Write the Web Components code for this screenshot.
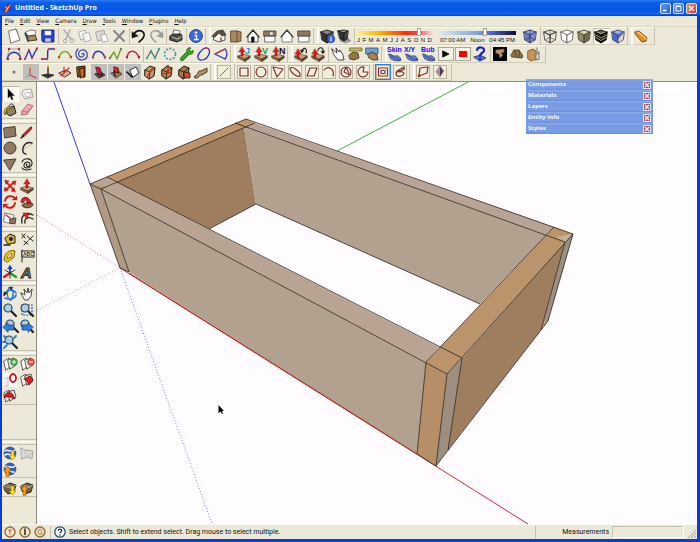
<!DOCTYPE html>
<html lang="en">
<head>
<meta charset="utf-8">
<title>Untitled - SketchUp Pro</title>
<style>
  :root {
    --face: #ece9d8;
    --edge: #c5c1ae;
    --frame: #0a3ecf;
    --menu-font: 'DejaVu Sans Condensed', 'DejaVu Sans', sans-serif;
    --ui-font: Roboto, 'Open Sans', sans-serif;
    --bold-font: 'Open Sans', 'Noto Sans', sans-serif;
  }
  html, body { height: 100%; margin: 0; }
  body { background: var(--face); font-family: var(--ui-font); color: #111; }
</style>
</head>
<body>

<sk-window caption="Untitled - SketchUp Pro">
  <sk-menubar slot="menu" items="File,Edit,View,Camera,Draw,Tools,Window,Plugins,Help"></sk-menubar>

  <sk-toolbar slot="bars" label="Standard" tools="new open save | cut copy paste delete | undo redo | print | info || iso top front right back left || shadowInfo shadow |">
    <sk-slider label="Month" kind="month" value="83" ticks="J,F,M,A,M,J,J,A,S,O,N,D"></sk-slider>
    <sk-slider label="Time of day" kind="time" value="60" ticks="07:00 AM,Noon,04:45 PM"></sk-slider>
    <sk-toolbar slot="more" label="Face style" tools="xray | wire hidden shaded textured:on mono || section"></sk-toolbar>
  </sk-toolbar>
  <sk-toolbar slot="bars" label="Curves" tools="bez1 bez2 bez3 bez4 spiral bez5 bez6 bez7 | poly1 polygonPts wrench blob sector || pushJ pushV pushN || undoPush redoPush | grab tape2 project || skin xy bub play stop help3d | scene fan slicer"></sk-toolbar>
  <sk-toolbar slot="bars" label="Construction" tools="dot axisRed:dim axisBlack plane door boxRed:dim boxRed2:dim layer:dim solid1 solid2 solid3 path || line | f-rect f-circle f-tri f-ellipse f-para f-arc f-polar f-pie | f-select:sel f-free || f-poly f-gem"></sk-toolbar>

  <sk-palette slot="side"></sk-palette>
  <sk-viewport></sk-viewport>
  <sk-tray slot="tray">
    <sk-panel>Components</sk-panel>
    <sk-panel>Materials</sk-panel>
    <sk-panel>Layers</sk-panel>
    <sk-panel>Entity Info</sk-panel>
    <sk-panel>Styles</sk-panel>
  </sk-tray>
  <sk-statusbar slot="status" label="Measurements">Select objects. Shift to extend select. Drag mouse to select multiple.</sk-statusbar>
</sk-window>

<script>
/* ── Icon helpers ─────────────────────────────────────────────────────────── */

const shape = (d, fill = 'none', stroke = '#222', w = 1) =>
  `<path d="${d}" fill="${fill}" stroke="${stroke}" stroke-width="${w}" stroke-linejoin="round" stroke-linecap="round"/>`;
const disc = (x, y, r, fill, stroke = 'none', w = 1) =>
  `<circle cx="${x}" cy="${y}" r="${r}" fill="${fill}" stroke="${stroke}" stroke-width="${w}"/>`;
const dots = (list, color) => list.map(([x, y]) => disc(x, y, 1.2, color)).join('');

const cube = (top, left, right, line) =>
  shape('M2 4L8 2L14 4L8 7Z', top, line, 0.8) +
  shape('M2 4L8 7V15L3 12Z', left, line, 0.8) +
  shape('M14 4L8 7V15L13 12Z', right, line, 0.8);

const redArrow = (x = 0, y = 0) =>
  `<g transform="translate(${x} ${y})">` + shape('M8 1L11 6H9V10H7V6H5Z', '#e51c1c', '#7a0000', 0.4) + '</g>';
const slab = shape('M2 10L7 8L14 10L9 13Z', '#c8a57c', '#4a3524', 0.6) +
  shape('M2 10L9 13V15.5L2 12Z', '#8c6a45', '#4a3524', 0.6) +
  shape('M14 10L9 13V15.5L14 12Z', '#5d452c', '#4a3524', 0.6);
const letter = (t, color) => `<text x="9" y="8" font-size="9" font-weight="700" fill="${color}">${t}</text>`;
const wideLetter = t => `<text x="0" y="6" font-size="7" font-weight="700" fill="#1414ff">${t}</text>`;
const cloth = shape('M2 8C5 8 6 11 9 10C11 9 13 11 14 14C10 16 6 14 4 13Z', '#6d83cf', '#1f2d66', 0.8) +
  shape('M4 10C7 13 10 12 13 14', 'none', '#26388a', 0.8);

const maroon = '#7b3036';
const framed = inner => `<rect x="1.5" y="1.5" width="13" height="13" fill="#f1efd9" stroke="#b9b59d"/>` + inner;
const maroonLine = d => framed(shape(d, 'none', maroon, 1.2));
const lens = (x = 0) => `<g transform="translate(${x} 0)">` + shape('M9 9L14 14', 'none', '#222', 2.2) +
  disc(6, 6, 4, '#a9cdea', '#26485f', 1.2) + '</g>';
const box3 = body => shape('M3 6L8 2L13 4L12 12L7 15L3 12Z', body, '#201812', 1) +
  shape('M3 6L8 8L13 4M8 8L7 15', 'none', '#201812', 0.8);
const globe = disc(8, 8, 6, '#2f5fc0', '#1a2f70', 0.6) +
  shape('M3 6C6 3 9 9 13 5M3 10C7 7 9 12 12 11', 'none', '#e8f0ff', 1.6);
const pages = shape('M2 5L7 2L9 10L4 14Z', '#fff', '#333', 0.8) + shape('M6 4L12 2L14 9L8 13Z', '#e5e5e5', '#333', 0.8);
const crate = shape('M2 6L8 3L14 5L12 12L6 14L3 11Z', '#6e5c46', '#2a2219', 0.9) +
  shape('M2 6L8 8L14 5M5 5L11 7', 'none', '#cabfa8', 0.8);
const yellowDown = shape('M9 6H12V11H14L10.500 15L7 11H9Z', '#ffe21a', '#9c7a00', 0.6);
const orangeUp = shape('M4 15V10H2L5.500 5L9 10H7V15Z', '#ff9d14', '#8c4a00', 0.6);

const ICONS = {
  /* standard */
  new: shape('M3 3L10 1L14 12L5 15Z', '#fff', '#555', 0.8) + shape('M10 1L12 5', 'none', '#777', 0.8),
  open: shape('M3 4L8 2L13 3L12 8H4Z', '#fff', '#555', 0.7) + shape('M2 5L5 13L14 12L12 7L6 8Z', '#a98c5f', '#38301d', 0.9) + shape('M2 6L5 14V9Z', '#2a7b9a', '#123', 0.6),
  save: shape('M2 2H14V14H3L2 13Z', '#2743cf', '#101d70', 0.8) + shape('M5 3H11V7H5Z', '#fff', '#cdd6ff', 0.4) + shape('M5 10H11V14H5Z', '#b9c4ee', '#101d70', 0.4),
  cut: shape('M4 2L11 11M10 2L6 11', 'none', '#aaa', 1.4) + disc(5, 13, 1.8, 'none', '#a5a5a5') + disc(12, 12.5, 1.8, 'none', '#a5a5a5'),
  copy: shape('M2 4L8 2L10 10L4 12Z', '#f4f4f0', '#aaa', 0.9) + shape('M6 6L12 4L14 12L8 14Z', '#f4f4f0', '#aaa', 0.9),
  paste: shape('M2 4L10 2L12 11L4 13Z', '#dcdad0', '#a4a4a0', 0.9) + shape('M7 7L12 6L14 13L9 14Z', '#fff', '#aaa', 0.9),
  delete: shape('M3 3L13 13M13 3L4 13', 'none', '#85858a', 2),
  undo: shape('M3 6C7 0 14 3 13 8C12 12 9 13 8 14', 'none', '#111', 1.6) + shape('M1 4V10L7 8Z', '#111', '#111', 0.5),
  redo: shape('M13 6C9 0 2 3 3 8C4 12 7 13 8 14', 'none', '#9b9b9b', 1.5) + shape('M15 4V10L9 8Z', '#9b9b9b', '#9b9b9b', 0.5),
  print: shape('M6 2L12 3L11 7H5Z', '#fff', '#444', 0.7) + shape('M2 8L5 6H13L14 8V12L9 14L2 12Z', '#4a4a48', '#111', 0.8) + shape('M4 9L9 11L13 9', 'none', '#c9c9c0', 1) + disc(10, 12, 0.8, '#66c060'),
  info: disc(8, 8, 6.4, '#3c6be0', '#172f83', 0.9) + disc(8, 4.6, 1.2, '#fff') + shape('M7 7.500H8.500V11.500M6.500 11.500H10', 'none', '#fff', 1.3),
  /* views */
  iso: shape('M3 8L8 4L14 7V12L8 14L3 12Z', '#f4f4f4', '#333', 0.8) + shape('M1 8L6 3L12 2L15 7L11 8L8 5L4 9Z', '#5c4d40', '#222', 0.6) + shape('M10 10V13', 'none', '#a33', 1.4),
  top: shape('M3 3H9V14H3ZM9 3L13 4V13L9 14', '#a98863', '#5b452c', 0.9),
  front: shape('M3 8V14H13V8L8 3Z', '#fff', '#333', 0.8) + shape('M2 9L8 2L14 9', 'none', '#333', 1.3) + shape('M7 9H9V14H7Z', '#111'),
  right: shape('M3 8H13V14H3Z', '#fff', '#555', 0.8) + shape('M2 3H14V8H2Z', '#8d7760', '#4d3e2e', 0.8) + shape('M8 4H11V7H8Z', '#eee', '#777', 0.5),
  back: shape('M3 8V14H13V8L8 3Z', '#fff', '#666', 0.8) + shape('M2 9L8 2L14 9', 'none', '#444', 1.3),
  left: shape('M3 8H13V14H3Z', '#fff', '#555', 0.8) + shape('M2 3H14V8H2Z', '#8d7760', '#4d3e2e', 0.8),
  shadowInfo: cube('#888', '#333', '#555', '#111') + disc(12, 11, 3.8, '#3465e0', '#12308a', 0.6) + shape('M12 10.500V13', 'none', '#fff', 1.2) + disc(12, 8.8, 0.7, '#fff'),
  shadow: shape('M4 13L9 15L15 13L12 10Z', '#999', '#888', 0.6) + shape('M2 3L8 2L12 3L8 5Z', '#999', '#111', 0.8) + shape('M2 3L8 5V13L4 11Z', '#333', '#111', 0.8) + shape('M12 3L8 5V13L11 11Z', '#444', '#111', 0.8),
  /* face styles */
  xray: cube('#9aa6dc', '#6f7fc4', '#7f8ed0', '#27305f') + shape('M3 12L8 9L13 12M8 2V9', 'none', '#303b70', 0.7),
  wire: cube('none', 'none', 'none', '#333') + shape('M3 12L8 9L13 12M8 2V9', 'none', '#555', 0.7),
  hidden: cube('#fff', '#fff', '#fff', '#555'),
  shaded: cube('#d8d3a9', '#918c6a', '#6f6b4f', '#3e3b2b'),
  textured: cube('#555', '#15130f', '#15130f', '#000') + shape('M3 7L8 10L13 7M3 9.500L8 12.500L13 9.500M4 4L8 5.500L12 4', 'none', '#bdb48b', 0.9),
  mono: cube('#9bb0e6', '#4a69c4', '#e5ddbc', '#333c66') + shape('M14 4L8 7V11Z', '#4a69c4', '#4a69c4', 0.4),
  section: shape('M2 4L6 3L14 10L13 13L9 14L3 7Z', '#f08a18', '#6b3d08', 0.9) + shape('M5 4L13 11', 'none', '#ffd089', 1.3),
  /* curves */
  bez1: shape('M1 13C4 4 12 4 15 13', 'none', '#2b34b5', 1.3) + shape('M3 3H13M3 3L1 13M13 3L15 13', 'none', '#777', 0.6) + dots([[3, 3], [13, 3], [2, 13], [14, 13]], '#b02030'),
  bez2: shape('M2 13L6 4L9 12L14 2', 'none', '#2b34b5', 1.4) + dots([[2, 13], [6, 4], [9, 12], [14, 3]], '#c04050'),
  bez3: shape('M2 13H7C9 11 6 4 9 3H14', 'none', '#2b34b5', 1.4) + dots([[2, 13], [7, 13], [9, 3], [14, 3]], '#c04050'),
  bez4: shape('M2 12C4 4 11 3 14 12', 'none', '#74a525', 1.5) + dots([[2, 11], [14, 11]], '#b04a30'),
  spiral: shape('M8 8C9 6 12 9 8 11C4 12 3 5 8 4C14 3 16 13 8 14C2 14 0 7 4 3', 'none', '#3b43b0', 1.2),
  bez5: shape('M2 12C3 3 11 3 14 12', 'none', '#2b34b5', 1.4) + dots([[2, 11], [14, 11]], '#c04050'),
  bez6: shape('M2 12L6 6L9 13L13 3', 'none', '#739a2b', 1.4) + dots([[2, 12], [13, 3]], '#777'),
  bez7: shape('M2 12C3 3 11 3 14 12', 'none', '#c02a50', 1.4) + dots([[2, 11], [14, 11]], '#803050'),
  poly1: shape('M2 12L6 5L10 12L14 3', 'none', '#4b7368', 1.3) + dots([[2, 12], [6, 5], [10, 12], [14, 3]], '#3aa0a8'),
  polygonPts: `<circle cx="8" cy="8" r="5.500" fill="none" stroke="#3a99a2" stroke-width="1.600" stroke-dasharray="2 1.500"/>`,
  wrench: shape('M3 13L10 6', 'none', '#1e6c16', 4) + shape('M3 13L10 6', 'none', '#45a82a', 2.4) + shape('M8 6C7 3 9 1 12 2L10 4L12 6L14 4C15 7 13 9 10 8Z', '#45a82a', '#1e6c16', 0.8),
  blob: shape('M6 4C10 0 15 2 13 8C11 14 4 16 2 12C1 9 3 7 6 4Z', 'none', '#2b34b5', 1.3) + shape('M5 5C8 1 13 1 13.500 5', 'none', '#b03050', 1),
  sector: shape('M2 8L12 3C15 6 14 11 12 13Z', 'none', '#2b34b5', 1.3) + shape('M2 8L12 3', 'none', '#c02a40', 1.2),
  pushJ: slab + redArrow(-2, 0) + letter('J', '#1d8fe0'),
  pushV: slab + redArrow(-2, 0) + letter('V', '#17a040'),
  pushN: slab + redArrow(-2, 0) + letter('N', '#111'),
  undoPush: slab + redArrow(-3, 2) + shape('M9 6C9 1 15 1 13 7', 'none', '#222', 1.1) + shape('M7 4L9 7L11 4Z', '#222', '#222', 0.3),
  redoPush: slab + redArrow(-3, 2) + shape('M8 5C8 1 14 0 13 6', 'none', '#222', 1.1) + shape('M11 5H15L13 8Z', '#222', '#222', 0.3),
  grab: shape('M2 3L7 7L6 2L9 6L10 4L13 9L14 14H8L4 9Z', '#fff', '#333', 0.9),
  tape2: shape('M3 2H15V5H3Z', '#c9bd5a', '#6c6428', 0.8) + shape('M2 9L6 6L11 7L12 12L7 14L3 13Z', '#927549', '#3c2e1a', 0.8),
  project: shape('M2 2H14V8H2Z', '#6fa0cf', '#39536c', 0.8) + shape('M4 8L8 6L13 9L14 14L9 14L5 12Z', '#a08256', '#3c2e1a', 0.8),
  skin: cloth + wideLetter('Skin'),
  xy: cloth + wideLetter('X/Y'),
  bub: cloth + wideLetter('Bub'),
  play: '<rect x="0.500" y="1.500" width="15" height="13" fill="#f3f1e4" stroke="#aca899"/>' + shape('M5 5L11 8L5 11Z', '#000'),
  stop: '<rect x="0.500" y="1.500" width="15" height="13" fill="#f3f1e4" stroke="#aca899"/><rect x="4" y="5" width="8" height="6" fill="#f00"/>',
  help3d: shape('M2 11L8 9L14 12L8 15Z', '#5b74c8', '#1c2a66', 0.8) + shape('M5 4C6 0 13 1 12 5C11 7 8 7 8 10', 'none', '#1a27c8', 2.2) + disc(8, 13, 1.3, '#1a27c8'),
  scene: '<rect x="1" y="1" width="14" height="14" fill="#000"/>' + shape('M4 4L12 3V6L9 7L11 9L8 12L7 8L4 7Z', '#b89470', '#7d5f40', 0.6),
  fan: shape('M2 9L5 4L10 4L14 10L13 12L3 11Z', '#8f7048', '#4a3822', 0.8) + shape('M5 4L8 11M10 4L11 12', 'none', '#4a3822', 0.6),
  slicer: shape('M2 5L7 3L10 5V13L5 15L2 13Z', '#c99352', '#6e4a20', 0.8) + shape('M8 10L13 6V13L9 14M11 2V8', 'none', '#888', 1.3),
  /* construction */
  dot: disc(8, 8, 1.5, '#777'),
  axisRed: shape('M7 3V11L13 14', 'none', '#d33', 1.1) + shape('M7 11L3 13', 'none', '#6a6', 0.8) + disc(7, 3, 1, '#dd2'),
  axisBlack: shape('M2 11L8 10L14 11L8 14Z', '#333', '#222', 0.8) + shape('M8 2V11', 'none', '#222', 1.3) + disc(8, 2.5, 1.1, '#fc2'),
  plane: shape('M2 9L9 6L14 9L8 13Z', '#d9b48a', '#3e2c1c', 0.9) + shape('M4 12L12 4M7 3V8', 'none', '#d02020', 1.1),
  door: shape('M3 3L11 2V13L4 13Z', '#7a4a24', '#281608', 1) + shape('M6 5L10 4V12L7 14Z', '#e06020', '#301808', 0.8),
  boxRed: shape('M4 10L10 8L14 11L8 14Z', '#444', '#111', 0.8) + shape('M5 3L9 4L11 11L7 10Z', '#c0223a', '#500', 0.8),
  boxRed2: shape('M3 9L10 7L14 10L8 14Z', '#a8783e', '#333', 0.8) + shape('M6 3L10 4L11 9L7 8Z', '#dd2a20', '#500', 0.8) + shape('M6 7L7 12', 'none', '#222', 1.4),
  layer: shape('M5 6L11 3L14 9L8 13Z', '#fff', '#222', 0.9) + shape('M2 8L7 13', 'none', '#111', 1.6),
  solid1: box3('#c49a66') + shape('M5 13L11 3', 'none', '#d02020', 1),
  solid2: box3('#b4854e') + shape('M9 1V9M3 10L13 8', 'none', '#d02020', 1.1),
  solid3: box3('#a9773f') + shape('M8 8L14 9V14H9Z', '#ce4a30', '#301808', 0.8),
  path: shape('M2 12C6 11 4 6 8 7L14 4V8L9 11C6 10 7 15 2 14Z', '#b59263', '#3b2c17', 0.9),
  line: framed(shape('M4 12L12 4', 'none', '#9a5a50', 1)),
  'f-rect': maroonLine('M4 4H12V12H4Z'),
  'f-circle': maroonLine('M8 3A5 5 0 1 0 8.010 3Z'),
  'f-tri': maroonLine('M3 3L13 5L7 13Z'),
  'f-ellipse': maroonLine('M3 4C6 2 14 8 13 12C10 14 3 8 3 4Z'),
  'f-para': maroonLine('M6 4H13L10 12H3Z'),
  'f-arc': maroonLine('M3 6C7 1 14 5 12 12'),
  'f-polar': maroonLine('M8 3A5 5 0 1 0 8.010 3ZM8 3L6 8L12 11M8 3L11 9'),
  'f-pie': maroonLine('M9 3A5 5 0 1 0 13 8H8Z'),
  'f-select': framed(shape('M3.500 4H12.500V12H3.500ZM6 6.500H10V9.500H6Z', 'none', maroon, 1.1)),
  'f-free': maroonLine('M4 9C5 5 9 6 12 3C14 7 8 6 5 8C9 7 14 8 11 11C8 13 4 13 4 9Z'),
  'f-poly': maroonLine('M5 4L13 3L12 9L4 12Z') + disc(4, 12, 1.4, '#c02020'),
  'f-gem': framed(shape('M8 2L12 7L8 13L4 8Z', '#5a3550', '#aaa', 0.8) + shape('M8 2V13L4 8Z', '#999', 'none', 0)),
  /* palette */
  select: shape('M6 3V12L8 10L10 14L11 13L9.500 9.500H12Z', '#000', '#000', 0.4),
  component: shape('M5 4L12 3L14 11L6 13L3 8Z', '#fdfdfd', '#999', 0.9) + shape('M6 7L11 6L12 10L7 11Z', 'none', '#aaa', 0.8),
  paint: shape('M5 6L12 4L14 11L8 14L5 12Z', '#8f8467', '#222', 1) + shape('M6 5C2 6 1 11 3 13L5 7L11 6', '#f4d52a', '#5b4a00', 0.8) + shape('M7 5C7 1 11 1 12 4', 'none', '#222', 1),
  eraser: shape('M3 9L9 2L14 4L8 12L3 13Z', '#f2a5b2', '#9c5566', 0.8) + shape('M3 9L8 10L8 12M8 10L14 4', 'none', '#b86478', 0.7),
  rect: shape('M2 4L13 2.500L14 12L3 14Z', '#8f7961', '#3d3124', 0.9),
  pencil: shape('M4 12L12 4', 'none', '#6b0d0d', 2.6) + shape('M5 11L12 4', 'none', '#ec2222', 1.5) + shape('M2 14L4 12', 'none', '#222', 1.4),
  circle: disc(8, 8, 6, '#8f7961', '#3d3124', 0.9),
  arc: shape('M13 3C7 1 3 6 4 12C5 14 7 14 7 14', 'none', '#222', 1.4) + shape('M5 9L13 4', 'none', '#999', 0.6),
  triangle: shape('M2 4L14 3L8 14Z', '#8f7961', '#3d3124', 0.9),
  freehand: shape('M3 6C5 1 14 2 13 8C12 13 4 13 5 9C6 5 11 5 11 9C10 12 6 10 8 8M3 12C5 15 10 14 12 13', 'none', '#222', 1.1),
  move: shape('M4 4L12 12M12 4L4 12', 'none', '#e02020', 1.8) + shape('M3 2L7 3L4 6ZM14 3L13 7L10 4ZM2 13L3 9L6 12ZM13 14L9 13L12 10Z', '#e02020', '#7a0000', 0.4),
  push: slab + redArrow(),
  rotate: shape('M3 7C4 1 11 1 13 5M13 9C12 15 5 15 3 11', 'none', '#d81818', 1.8) + shape('M10 6H15V2ZM6 10H1V14Z', '#d81818', '#d81818', 0.3),
  follow: shape('M3 11C3 15 14 15 14 10L10 8Z', '#8c6a45', '#333', 0.9) + shape('M2 8C2 2 10 1 12 9L9 10C8 5 5 5 5 8Z', '#e02222', '#600', 0.7),
  scale: shape('M3 3L12 5L10 14L2 12Z', '#fff', '#666', 0.8) + shape('M8 9L14 8L13 14L8 13Z', '#927450', '#333', 0.8) + shape('M4 5L8 8', 'none', '#d22', 1.5),
  offset: shape('M3 13C1 5 8 2 14 5M6 13C5 8 9 6 14 9', 'none', '#222', 1.3) + shape('M4 3L10 3L8 9Z', '#e02020', '#700', 0.5),
  tape: shape('M3 6L8 2L13 4L13 11L6 12Z', '#e6b31c', '#2b2200', 1) + disc(9, 7, 2.4, '#222', '#ddd', 0.6) + shape('M2 13H8', 'none', '#222', 1.4),
  dims: shape('M3 2L6 6M6 2L3 6M5 9L9 12M9 9L5 13M8 4L14 9M10 8L14 4', 'none', '#222', 1),
  protractor: shape('M2 12C2 5 8 1 13 3L12 9L6 14Z', '#f0c323', '#6d5300', 0.9) + shape('M5 10C6 7 8 5 10 6L9 9Z', '#f7f1d8', '#6d5300', 0.7),
  label: shape('M3 2V14', 'none', '#222', 1) + '<rect x="3" y="3" width="12" height="6" fill="#fff" stroke="#222"/><text x="4" y="8" font-size="5" font-weight="700" fill="#222">ABC</text>',
  axes: shape('M8 9V3', 'none', '#1640c8', 1.8) + shape('M8 1L10.500 5H5.500Z', '#1640c8', '#1640c8', 0.3) + shape('M8 9L2 13', 'none', '#d81818', 2.2) + shape('M8 9L14 13', 'none', '#1c9a2a', 2.2) + shape('M8 9L3 6M8 9L13 6M8 9V14', 'none', '#222', 0.9),
  text3d: '<text x="2" y="14" font-size="15" font-weight="700" font-style="italic" fill="#8c7150" stroke="#222" stroke-width="0.8">A</text>',
  orbit: shape('M2 9C4 3 12 3 14 7M3 12C7 14 13 13 14 9', 'none', '#2b78c4', 1.6) + shape('M7 2C4 6 5 12 8 14M10 3C12 7 11 11 9 14', 'none', '#2b78c4', 1.4) + shape('M7 1H11L9 4ZM2 6L5 7L2 10Z', '#222', '#222', 0.3),
  pan: shape('M2 7L6 9L5 3L8 7L9 2L10 7L13 3L12 10L9 14H6Z', '#fff', '#333', 0.9),
  zoom: lens(),
  zoomWin: '<path d="M3 3H13V13H3Z" fill="none" stroke="#2f55cc" stroke-width="1.200" stroke-dasharray="2 1"/>' + lens(),
  zoomPrev: lens(2) + shape('M1 9L6 5V7H12V12H6V14Z', '#2c7fd4', '#123a70', 0.7),
  zoomNext: lens() + shape('M14 9L9 5V7H3V12H9V14Z', '#2c7fd4', '#123a70', 0.7),
  zoomFit: lens(1) + shape('M2 2L4 4M14 2L12 4M2 14L5 11M1 8H3', 'none', '#2f7fb8', 1.8),
  addPage: pages + disc(12, 6, 3.4, '#46b04a', '#1e6c22', 0.5) + shape('M12 4.500V7.500M10.500 6H13.500', 'none', '#fff', 1),
  delPage: pages + disc(12, 6, 3.4, '#e8514a', '#8c1e1a', 0.5) + shape('M10.500 6H13.500', 'none', '#fff', 1.2),
  redRing: '<rect x="1" y="1" width="14" height="14" fill="#fff"/>' + shape('M2 7L6 5V14L2 14', '#eee', '#aaa', 0.7) + `<ellipse cx="11" cy="6" rx="3" ry="4" fill="none" stroke="#c4121c" stroke-width="1.800"/>`,
  redBox1: pages + shape('M5 7L11 4L14 8L10 13L8 9Z', '#e51c1c', '#500', 0.7),
  redBox2: pages + shape('M2 9C3 4 9 3 11 7L13 11L8 9Z', '#e51c1c', '#500', 0.7),
  getModel: globe + yellowDown,
  terrain: shape('M2 3L6 5L14 6L13 14L8 12L3 14Z', '#d8d8d8', '#999', 0.8) + shape('M6 5L8 12L13 8', 'none', '#b5b5b5', 0.7),
  placeModel: globe + orangeUp,
  blank: '',
  download: crate + yellowDown,
  upload: crate + orangeUp,
  logo: shape('M3 12L5 5L11 2L13 4L10 11L5 14Z', '#c8402c', '#5c1a10', 0.9) + shape('M5 6L8 8L12 3M8 8L6 13', 'none', '#ffe6c8', 1.2)
};

/* ── Base class: render into an open shadow root ──────────────────────────── */

class SkElement extends HTMLElement {
  constructor() {
    super();
    this.attachShadow({ mode: 'open' });
  }
  connectedCallback() {
    this.shadowRoot.innerHTML = this.render();
  }
}

/** <sk-tool name="undo" state="on|dim|sel"> */
class SkTool extends SkElement {
  render() {
    const name = this.getAttribute('name');
    return /* html */ `
      <style>
        :host { display: block; width: 17px; height: 16px; flex: none; }
        button { display: block; width: 100%; height: 100%; padding: 0; border: 0; background: none; }
        :host([state="on"]) button { background: #f8f7f0; box-shadow: inset 1px 1px #c0bca8, inset -1px -1px #fff; }
        :host([state="dim"]) svg { background: #bfbfbf; }
        :host([state="sel"]) svg { background: #2f7fe4; }
        svg { display: block; width: 16px; height: 16px; font-family: 'Liberation Sans', sans-serif; overflow: visible; }
      </style>
      <button type="button" aria-label="${name}"><svg viewBox="0 0 16 16" aria-hidden="true">${ICONS[name] || ''}</svg></button>`;
  }
}

/** <sk-toolbar tools="a b | c || d">: "|" is a divider, "||" starts a new bar. */
class SkToolbar extends SkElement {
  render() {
    const parts = this.getAttribute('tools').split(' ').map(t => {
      if (t === '|') return '<i class="sep"></i>';
      if (t === '||') return '<i class="grip"></i>';
      const [name, state = ''] = t.split(':');
      return `<sk-tool name="${name}" state="${state}"></sk-tool>`;
    });
    return /* html */ `
      <style>
        :host { display: flex; height: 18px; }
        .bar {
          display: flex; align-items: center; box-sizing: border-box; height: 18px; padding: 0 2px 0 4px;
          border-top: 1px solid #fbfaf4; border-bottom: 1px solid #d2cebb; border-right: 1px solid var(--edge);
        }
        :host([slot="more"]) .bar { padding-left: 6px; border: 0; }
        i { flex: none; align-self: stretch; box-sizing: border-box; }
        .sep { width: 3px; background: linear-gradient(var(--edge), var(--edge)) 1px 0 / 1px 100% no-repeat; }
        .grip { width: 6px; border: solid var(--edge); border-width: 0 2px 0 1px; border-right-color: #fbfaf4; }
        slot { display: flex; gap: 6px; }
      </style>
      <div class="bar" role="toolbar" aria-label="${this.getAttribute('label')}">
        ${parts.join('')}<slot></slot><slot name="more"></slot>
      </div>`;
  }
}

/** Shadow settings slider with a tick row under it. */
class SkSlider extends SkElement {
  render() {
    const ticks = this.getAttribute('ticks').split(',').map(t => `<span>${t}</span>`).join('');
    const label = this.getAttribute('label');
    return /* html */ `
      <style>
        :host { display: block; width: 77px; }
        input {
          -webkit-appearance: none; appearance: none; display: block; width: 100%; height: 8px; margin: 0;
          background: linear-gradient(to right, #fff3a0, #ffb400 30%, #ff2a00 65%, #f24a4a 80%, #ffe0e0) center 3px / 100% 4px no-repeat;
        }
        :host([kind="time"]) input { background-image: linear-gradient(to right, #dfe9f5, #7fa4dc 50%, #4a5fd0 70%, #0a0a28); }
        input::-webkit-slider-thumb { -webkit-appearance: none; width: 4px; height: 8px; background: #fff; border: 1px solid #aca899; box-sizing: border-box; }
        div { display: flex; justify-content: space-between; font: 6px/8px 'Liberation Sans', sans-serif; padding: 0 1px; white-space: nowrap; }
      </style>
      <input type="range" min="0" max="100" value="${this.getAttribute('value')}" aria-label="${label}">
      <div>${ticks}</div>`;
  }
}

class SkMenubar extends SkElement {
  render() {
    const items = this.getAttribute('items').split(',')
      .map(t => `<button type="button"><u>${t[0]}</u>${t.slice(1)}</button>`).join('');
    return /* html */ `
      <style>
        :host { display: block; }
        nav { display: flex; gap: 6px; height: 11px; padding: 0 3px; border-bottom: 1px solid #dcd8c6; box-sizing: border-box; }
        button { padding: 0; border: 0; background: none; color: inherit; font: 6px/10px var(--menu-font); }
      </style>
      <nav>${items}</nav>`;
  }
}

/** Left-hand tool palette: groups of two columns. */
class SkPalette extends SkElement {
  render() {
    const groups = [
      'select:on component paint eraser',
      'rect pencil circle arc triangle freehand',
      'move push rotate follow scale offset',
      'tape dims protractor label axes text3d',
      'orbit pan zoom zoomWin zoomPrev zoomNext zoomFit',
      'addPage delPage redRing redBox1 redBox2'
    ];
    const google = ['getModel terrain placeModel blank', 'download upload'];
    const section = list => '<section>' + list.split(' ').map(t => {
      const [name, state = ''] = t.split(':');
      return `<sk-tool name="${name}" state="${state}"></sk-tool>`;
    }).join('') + '</section>';
    return /* html */ `
      <style>
        :host { display: flex; flex-direction: column; width: 35px; box-sizing: border-box; padding-top: 4px; border-right: 1px solid #8f8c7c; border-top: 1px solid #8f8c7c; background: var(--face); }
        section { display: grid; grid-template-columns: 17px 17px; }
        hr { width: 100%; height: 6px; margin: 0; box-sizing: border-box; border: solid var(--edge); border-width: 1px 0; background: #f8f7ef; background-clip: content-box; padding: 1px 0; }
        hr.thin { height: 3px; border-bottom: 0; }
        .free { flex: 0 1 34px; border-top: 1px solid var(--edge); }
        .end { border-top: 1px solid var(--edge); }
      </style>
      ${groups.map(section).join('<hr>')}
      <div class="free"></div><hr>
      ${google.map(section).join('<hr class="thin">')}
      <div class="end"></div>`;
  }
}

/** Modelling area: axes, the four-board frame and the pointer. */
class SkViewport extends SkElement {
  render() {
    const face = (pts, fill) => `<polygon points="${pts}" fill="${fill}"/>`;
    return /* html */ `
      <style>
        :host { display: block; flex: 1; min-width: 0; min-height: 0; background: #fefcff; border-top: 1px solid #8f8c7c; overflow: hidden; }
        svg { display: block; width: 100%; height: 100%; }
        .edges { fill: none; stroke: #2c241c; stroke-width: 0.8; }
      </style>
      <svg viewBox="37 82 660 442" preserveAspectRatio="xMinYMin slice" role="img" aria-label="Wooden frame model">
        <g fill="none" stroke-width="1">
          <path d="M54 82L90 184" stroke="#3a3ac8"/>
          <path d="M120 268L212 524" stroke="#8080d8" stroke-dasharray="1 2"/>
          <path d="M337 151L470 81" stroke="#3cb43c"/>
          <path d="M37 310L120 268" stroke="#7cc87c" stroke-dasharray="1 2"/>
          <path d="M37 215L120 268" stroke="#e08080" stroke-dasharray="1 2"/>
          <path d="M120 268L528 524" stroke="#d03030"/>
        </g>
        ${face('116,182 244,127 256,204 209,229', '#9e7e5f')}
        ${face('244,127 547,235 480,304 256,204', '#b3a18f')}
        ${face('107,177 246,119 255,123 116,182', '#bd946b')}
        ${face('90,184 107,177 116,182 101,189', '#b9a592')}
        ${face('94,186 106,187 101,189', '#bd946b')}
        ${face('255,123 554,227 547,235 244,127', '#b8a494')}
        ${face('554,227 573,234 565,242 547,235', '#bc946b')}
        ${face('101,189 116,182 439,347 426,362', '#b9a493')}
        ${face('90,184 101,189 129,272 120,268', '#b09a83')}
        ${face('101,189 426,362 417,454 129,272', '#b3a18f')}
        ${face('426,362 547,235 565,242 447,374', '#bc946b')}
        ${face('556,237 573,234 565,242', '#c4b09c')}
        ${face('426,362 447,374 436,466 417,454', '#b68f68')}
        ${face('447,374 462,358 448,450 436,466', '#9d8e7f')}
        ${face('462,358 565,242 541,330 448,450', '#9e7e5f')}
        ${face('565,242 573,234 548,321 543,323', '#9d8e7f')}
        ${face('543,323 548,321 541,330', '#bc946b')}
        <path class="edges" d="M90 184L246 119L573 234L447 374L101 189L90 184L120 268M101 189L255 123M107 177L462 358M235 123L565 242M426 362L554 227
          M101 189L129 272M256 204L209 229M256 204L480 304M426 362L417 454L436 466L447 374M462 358L448 450M436 466L548 321L573 234M565 242L541 330M120 268L129 272"/>
        <path d="M129 273L417 454" stroke="#a02a20" stroke-width="1"/>
        <path d="M218.500 405V413L220.500 411.500L222 414L223 413.500L221.800 411H224Z" fill="#000"/>
      </svg>`;
  }
}

class SkTray extends SkElement {
  render() {
    return /* html */ `
      <style>
        :host { display: block; width: 127px; }
      </style>
      <slot></slot>`;
  }
}

class SkPanel extends SkElement {
  render() {
    return /* html */ `
      <style>
        :host {
          display: flex; align-items: center; justify-content: space-between; height: 11px; padding: 0 2px; box-sizing: border-box;
          background: linear-gradient(#8fb0ee, #7799e2 20%, #7b9de6 80%, #6b8cd8); color: #f4f8ff; font: 700 6px/11px var(--bold-font);
        }
        button { width: 8px; height: 8px; padding: 0; border: 1px solid #dfe4f8; background: #b85068; }
        svg { display: block; width: 6px; height: 6px; }
      </style>
      <slot></slot>
      <button type="button" aria-label="Close"><svg viewBox="0 0 6 6"><path d="M1 1L5 5M5 1L1 5" stroke="#fff" stroke-width="1.300"/></svg></button>`;
  }
}

class SkStatusbar extends SkElement {
  render() {
    const ring = inner => `<svg viewBox="0 0 12 12"><circle cx="6" cy="6" r="5" fill="#efe6cf" stroke="#9a6a2c" stroke-width="1.400"/>${inner}</svg>`;
    return /* html */ `
      <style>
        :host { display: flex; align-items: center; height: 15px; padding: 0 1px 0 2px; font: 7px/12px var(--ui-font); border-top: 1px solid #fbfaf4; box-sizing: border-box; overflow: hidden; }
        .rings { display: flex; gap: 3px; padding-right: 4px; border-right: 1px solid var(--edge); }
        svg { display: block; width: 12px; height: 12px; flex: none; }
        .help { margin: 0 3px; }
        p { flex: 1; margin: 0; white-space: nowrap; }
        label { display: flex; align-items: center; gap: 3px; padding-left: 26px; border-left: 1px solid var(--edge); }
        input { width: 72px; height: 12px; padding: 0; border: 1px solid; border-color: var(--edge) #fff #fff var(--edge); background: var(--face); box-sizing: border-box; font: inherit; }
      </style>
      <div class="rings">
        ${ring('<path d="M6 3V9M4.500 4H7.500L6 6Z" stroke="#d08078" fill="#d08078"/>')}
        ${ring('<path d="M6 4V9" stroke="#5c5344" stroke-width="2"/><circle cx="6" cy="3.200" r="1" fill="#5c5344"/>')}
        ${ring('<path d="M8 4C6 3 4 4 4 6S6 9 8 8V6H6.500" fill="none" stroke="#b09468" stroke-width="1.200"/>')}
      </div>
      <svg class="help" viewBox="0 0 12 12"><circle cx="6" cy="6" r="5.200" fill="#fff" stroke="#1d4f7c" stroke-width="1.300"/><path d="M4.300 4.600C4.500 2.600 7.800 2.700 7.600 4.700C7.500 5.700 6 5.800 6 7.200" fill="none" stroke="#123a60" stroke-width="1.400"/><circle cx="6" cy="9" r="0.800" fill="#123a60"/></svg>
      <p><slot></slot></p>
      <label>${this.getAttribute('label')}<input type="text"></label>
      <svg viewBox="0 0 12 12"><path d="M4 12L12 4M7 12L12 7M10 12L12 10" stroke="#aca899"/></svg>`;
  }
}

class SkWindow extends SkElement {
  render() {
    const caption = this.getAttribute('caption');
    return /* html */ `
      <style>
        :host { display: flex; flex-direction: column; height: 100vh; box-sizing: border-box; border: solid var(--frame); border-width: 0 3px 3px 2px; background: var(--face); position: relative; }
        header {
          display: flex; align-items: center; gap: 2px; height: 16px; margin: 0 -3px 0 -2px; padding: 0 3px 0 2px; flex: none;
          background: linear-gradient(#2a7cf2, #0a5be8 20%, #0455e0 60%, #0a62fa 85%, #0340b8);
        }
        .logo { width: 11px; height: 11px; }
        h1 { flex: 1; margin: 0; color: #fff; font: 700 7px/16px var(--bold-font); }
        header button { width: 11px; height: 11px; padding: 0; border: 1px solid #dce8ff; border-radius: 2px; background: linear-gradient(135deg, #6f9cf5, #2458d6); }
        header button:last-child { background: linear-gradient(135deg, #f0906c, #d23c14); }
        header button svg { display: block; width: 9px; height: 9px; }
        main { display: flex; flex: 1; min-height: 0; }
        .body { display: flex; flex: 1; min-width: 0; }
        slot[name="bars"] { display: block; }
        slot[name="tray"]::slotted(*) { position: absolute; top: 79px; right: 44px; }
      </style>
      <header>
        <svg class="logo" viewBox="0 0 16 16">${ICONS.logo}</svg>
        <h1>${caption}</h1>
        <button type="button" aria-label="Minimize"><svg viewBox="0 0 9 9"><path d="M2 6.500H5.500" stroke="#fff" stroke-width="1.600"/></svg></button>
        <button type="button" aria-label="Maximize"><svg viewBox="0 0 9 9"><path d="M2 2.500H7V7H2ZM2 2H7" fill="none" stroke="#fff"/></svg></button>
        <button type="button" aria-label="Close"><svg viewBox="0 0 9 9"><path d="M2 2L7 7M7 2L2 7" stroke="#fff" stroke-width="1.300"/></svg></button>
      </header>
      <slot name="menu"></slot>
      <slot name="bars"></slot>
      <main>
        <slot name="side"></slot>
        <div class="body"><slot></slot></div>
      </main>
      <slot name="tray"></slot>
      <slot name="status"></slot>`;
  }
}

customElements.define('sk-tool', SkTool);
customElements.define('sk-toolbar', SkToolbar);
customElements.define('sk-slider', SkSlider);
customElements.define('sk-menubar', SkMenubar);
customElements.define('sk-palette', SkPalette);
customElements.define('sk-viewport', SkViewport);
customElements.define('sk-tray', SkTray);
customElements.define('sk-panel', SkPanel);
customElements.define('sk-statusbar', SkStatusbar);
customElements.define('sk-window', SkWindow);
</script>
</body>
</html>
